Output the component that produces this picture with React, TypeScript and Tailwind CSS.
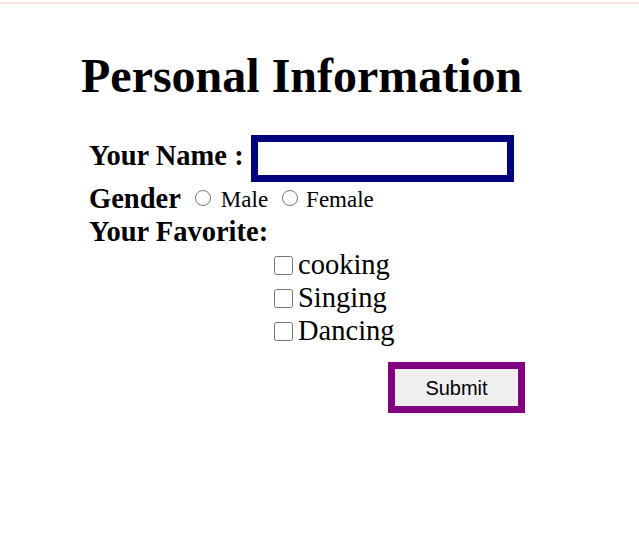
import React from 'react';

const favorites = ['cooking', 'Singing', 'Dancing'];

const App = () => {
  return (
    <div className="min-h-[533px] bg-white text-black font-['Liberation_Serif','Times_New_Roman',serif]">
      <div className="pt-[2px]">
        <div className="h-[2px] bg-[#fbe3dc]" />
      </div>

      <div className="pl-[81px]">
        <h1 className="mt-[44px] text-[48px] leading-[56px] font-bold">Personal Information</h1>

        <form className="pl-[8px] mt-[31px]" onSubmit={(e) => e.preventDefault()}>
          {/* name */}
          <div className="flex items-start h-[47px]">
            <label className="mt-[5px] text-[28.5px] leading-[32px] font-bold">Your Name :</label>
            <input
              type="text"
              className="ml-[7px] w-[263px] h-[47px] border-[7px] border-[#000080] bg-white outline-none"
            />
          </div>

          {/* gender */}
          <div className="flex items-start h-[33px]">
            <span className="mt-[1px] text-[28.5px] leading-[32px] font-bold">Gender</span>
            <input type="radio" name="gender" className="ml-[14px] mt-[8px] w-[16px] h-[16px]" />
            <span className="ml-[10px] mt-[5px] text-[23px] leading-[26px]">Male</span>
            <input type="radio" name="gender" className="ml-[14px] mt-[8px] w-[16px] h-[16px]" />
            <span className="ml-[8px] mt-[5px] text-[23px] leading-[26px]">Female</span>
          </div>

          {/* favorites */}
          <div className="mt-[1px] text-[28.5px] leading-[32px] font-bold">Your Favorite:</div>
          <div className="pl-[185px]">
            {favorites.map((f) => (
              <label key={f} className="flex items-start h-[33px]">
                <input type="checkbox" className="mt-[8px] w-[19px] h-[19px]" />
                <span className="ml-[5px] text-[28.5px] leading-[33px]">{f}</span>
              </label>
            ))}
          </div>

          <div className="pl-[299px] mt-[15px]">
            <button
              type="submit"
              className="w-[137px] h-[51px] border-[7px] border-[#800080] bg-[#efefef] text-[20px] text-black font-['Liberation_Sans',Arial,sans-serif]"
            >
              Submit
            </button>
          </div>
        </form>
      </div>
    </div>
  );
};

export default App;
